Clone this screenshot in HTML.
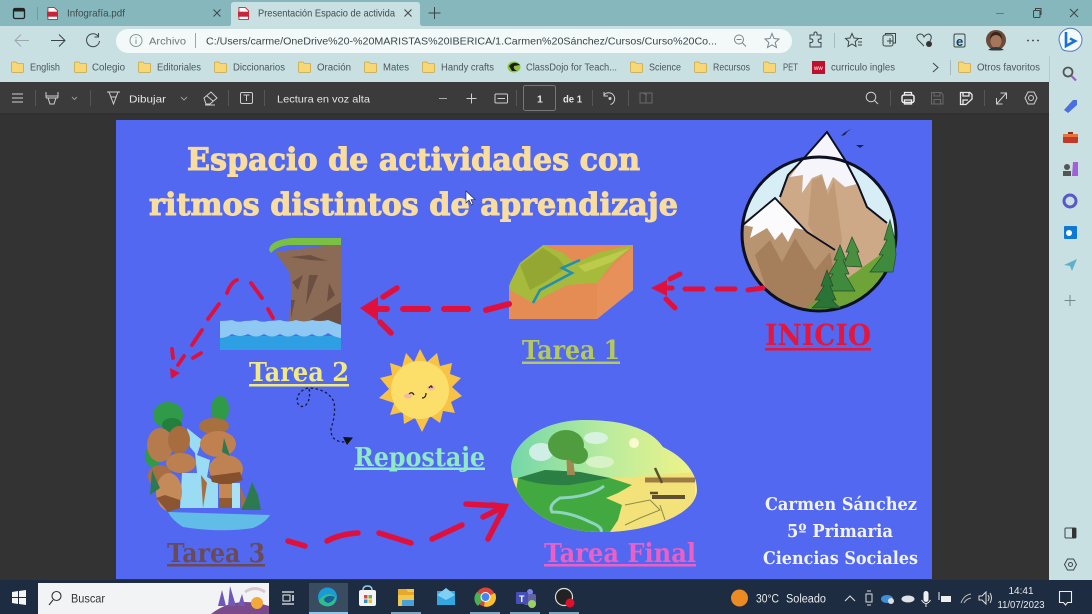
<!DOCTYPE html>
<html lang="es"><head><meta charset="utf-8"><title>Presentación Espacio de actividades</title>
<style>
html,body{margin:0;padding:0;width:1092px;height:614px;overflow:hidden;background:#323232}
svg{display:block;position:absolute;left:0;top:0;font-family:"Liberation Sans",sans-serif;filter:blur(.35px)}
.ui{font-size:10.5px;fill:#3f4b4d}
.bm{font-size:10px;fill:#4a5759}
.pd{font-size:10.5px;fill:#e6e6e6}
.ic{fill:none;stroke:#3c4648;stroke-width:1}
.id{fill:none;stroke:#cfcfcf;stroke-width:1}
.ig{fill:none;stroke:#76878a;stroke-width:1}
.sl{font-family:"DejaVu Serif","Liberation Serif",serif;font-weight:bold}
.r{fill:none;stroke:#e0103c;stroke-linecap:round}
</style></head><body>
<svg width="1092" height="614" viewBox="0 0 1092 614" xmlns="http://www.w3.org/2000/svg">
<defs>
<symbol id="f" viewBox="0 0 13 12" overflow="visible"><path d="M.5 2.2Q.5 1 1.6 1H5L6.2 2.3H11.5Q12.6 2.3 12.6 3.4V10.4Q12.6 11.4 11.5 11.4H1.6Q.5 11.4 .5 10.4Z" fill="#f8d776" stroke="#c9a23e" stroke-width=".7"/></symbol>
<symbol id="pdf" viewBox="0 0 12 14" overflow="visible"><path d="M1 .5H8L11.5 4V13.5H1Z" fill="#fff" stroke="#c8243a"/><rect x="0" y="5" width="12" height="5.5" fill="#c8243a"/></symbol>
<clipPath id="c"><circle cx="819" cy="234" r="76"/></clipPath>
<clipPath id="land"><path d="M511 469C512 440 545 420 585 420C622 420 650 428 663 447C680 455 697 470 697 490C697 512 655 532 600 532C550 532 515 505 511 469Z"/></clipPath>
<linearGradient id="sky" x1="0" x2="1" y1="0" y2="0"><stop offset="0" stop-color="#6fd6a8"/><stop offset=".5" stop-color="#b9eb9e"/><stop offset="1" stop-color="#f6f584"/></linearGradient>
</defs>

<!-- chrome -->
<rect width="1092" height="26" fill="#85b7bc"/>
<rect y="26" width="1092" height="56" fill="#c9e0e3"/>
<rect x="1049" y="82" width="43" height="498" fill="#c9e0e3"/>
<rect x="1049" y="56" width="1" height="26" fill="#b0c8cb"/>
<rect y="82" width="1049" height="32" fill="#3b3b3b"/>
<rect y="114" width="1049" height="466" fill="#333"/>
<rect y="113.500" width="1049" height="1" fill="#2a2a2a"/>

<!-- tabs -->
<rect x="13.500" y="8.500" width="11" height="10" rx="1.500" fill="none" stroke="#222" stroke-width="1.300"/><rect x="13.500" y="8.500" width="11" height="3" fill="#222"/>
<rect x="37" y="7" width="1" height="13" fill="#6d9da2"/>
<use href="#pdf" x="47" y="7" width="11" height="13"/>
<text class="ui" x="67" y="16.500" textLength="58" lengthAdjust="spacingAndGlyphs">Infografía.pdf</text>
<path d="M213.500 9.500L220.500 16.500M220.500 9.500L213.500 16.500" class="ic"/>
<path d="M229 26Q231 26 231 23V5Q231 2 234 2H417Q420 2 420 5V23Q420 26 423 26Z" fill="#c9e0e3"/>
<use href="#pdf" x="238" y="7" width="11" height="13"/>
<text class="ui" x="258" y="16.500" textLength="137" lengthAdjust="spacingAndGlyphs">Presentación Espacio de activida</text>
<path d="M404.500 9.500L411.500 16.500M411.500 9.500L404.500 16.500" class="ic"/>
<path d="M434.500 7V19M428.500 13H440.500" class="ic"/>
<path d="M996 13.500H1004" stroke="#5c7d80" fill="none"/>
<rect x="1033.500" y="10.500" width="6.500" height="7" rx="1" class="ic"/><path d="M1035.500 10V8.500H1041V14.500H1040" class="ic"/>
<path d="M1070 9L1078 17M1078 9L1070 17" class="ic"/>

<!-- nav -->
<path d="M15 40.500H29M21 34.500L15 40.500L21 46.500" fill="none" stroke="#98aaad"/>
<path d="M51 40.500H65M59 34.500L65 40.500L59 46.500" class="ic"/>
<path d="M98 36A6.500 6.500 0 1 0 99.500 41M98.500 33V37H94.500" class="ic"/>
<rect x="116" y="29" width="676" height="24" rx="12" fill="#f3f8f9"/>
<circle cx="136" cy="40.500" r="6" fill="none" stroke="#8a9597" stroke-width="1"/><path d="M136 39.500V44M136 37V38.200" stroke="#8a9597" fill="none"/>
<text class="ui" x="149" y="44.500" textLength="37" lengthAdjust="spacingAndGlyphs" style="fill:#6b7779">Archivo</text>
<rect x="195" y="33" width="1" height="15" fill="#9aa6a8"/>
<text class="ui" x="206" y="44.500" textLength="511" lengthAdjust="spacingAndGlyphs" style="fill:#39464a">C:/Users/carme/OneDrive%20-%20MARISTAS%20IBERICA/1.Carmen%20Sánchez/Cursos/Curso%20Co...</text>
<circle cx="739" cy="39.500" r="4.500" class="ig"/><path d="M736.500 39.500H741.500M742.500 43L746 46.500" class="ig"/>
<path d="M772 33.500L774 38.500L779 39L775.200 42.500L776.500 47.500L772 44.800L767.500 47.500L768.800 42.500L765 39L770 38.500Z" class="ig"/>
<path d="M810 35H814V33.500A1.500 1.500 0 0 1 817 33.500V35H821V39H819.500A1.800 1.800 0 0 0 819.500 42.500H821V47H810V42.500H811.500A1.800 1.800 0 0 0 811.500 39H810Z" class="ic"/>
<rect x="834" y="33" width="1" height="15" fill="#a5bbbe"/>
<path d="M852 33.500L854 38L858.500 38.500L855.200 41.500L856 46.500L852 44L848 46.500L848.800 41.500L845.500 38.500L850 38ZM858 42H862M859.500 38.500H862M858 45H862" class="ic"/>
<rect x="883" y="35" width="10" height="11" rx="2" class="ic"/><path d="M885.500 35V33.500H895.500V43H893M890 38V44M887 41H893" class="ic"/>
<path d="M924 46L918 40Q915 35 920 34Q923 34 924 37Q926 34 929 34Q933 36 930 41" class="ic"/><circle cx="929" cy="44" r="3" fill="#333"/>
<rect x="954" y="34" width="11" height="13" rx="1.500" class="ic"/><text x="956" y="46" font-size="13" font-weight="bold" fill="#123f66">e</text>
<circle cx="996" cy="40" r="10" fill="#6b4a38"/><ellipse cx="996" cy="41" rx="5.500" ry="7" fill="#a5765c"/><path d="M988 50Q996 44 1004 50L1000 50.500H992Z" fill="#2e3a3a"/><path d="M990 40Q990 32 996 32Q1002 32 1002 40Q1000 35 996 35Q992 35 990 40Z" fill="#3a241b"/>
<circle cx="1028" cy="40.500" r=".9" fill="#333"/><circle cx="1033" cy="40.500" r=".9" fill="#333"/><circle cx="1038" cy="40.500" r=".9" fill="#333"/>
<path d="M1062 49Q1059 42 1059 39A11.500 11.500 0 1 1 1068 51Q1064 51 1062 49Z" fill="#f4f9fb" stroke="#4a7cc8" stroke-width="1"/>
<path d="M1066 32V46L1075 41L1070 38.500" fill="none" stroke="#1c72d4" stroke-width="2.600"/>

<!-- bookmarks -->
<use href="#f" x="11" y="61" width="13" height="12"/><text class="bm" x="30" y="70.500" textLength="30" lengthAdjust="spacingAndGlyphs">English</text>
<use href="#f" x="74" y="61" width="13" height="12"/><text class="bm" x="92" y="70.500" textLength="33" lengthAdjust="spacingAndGlyphs">Colegio</text>
<use href="#f" x="138" y="61" width="13" height="12"/><text class="bm" x="157" y="70.500" textLength="44" lengthAdjust="spacingAndGlyphs">Editoriales</text>
<use href="#f" x="214" y="61" width="13" height="12"/><text class="bm" x="233" y="70.500" textLength="52" lengthAdjust="spacingAndGlyphs">Diccionarios</text>
<use href="#f" x="298" y="61" width="13" height="12"/><text class="bm" x="317" y="70.500" textLength="34" lengthAdjust="spacingAndGlyphs">Oración</text>
<use href="#f" x="364" y="61" width="13" height="12"/><text class="bm" x="383" y="70.500" textLength="26" lengthAdjust="spacingAndGlyphs">Mates</text>
<use href="#f" x="422" y="61" width="13" height="12"/><text class="bm" x="441" y="70.500" textLength="53" lengthAdjust="spacingAndGlyphs">Handy crafts</text>
<ellipse cx="514" cy="67" rx="6.500" ry="5.500" fill="#8bc540"/><path d="M509 66Q514 60 520 65L514 66Q513 69 517 71L512 71Z" fill="#1d1d1b"/>
<text class="bm" x="526" y="70.500" textLength="91" lengthAdjust="spacingAndGlyphs">ClassDojo for Teach...</text>
<use href="#f" x="630" y="61" width="13" height="12"/><text class="bm" x="649" y="70.500" textLength="32" lengthAdjust="spacingAndGlyphs">Science</text>
<use href="#f" x="694" y="61" width="13" height="12"/><text class="bm" x="713" y="70.500" textLength="37" lengthAdjust="spacingAndGlyphs">Recursos</text>
<use href="#f" x="763" y="61" width="13" height="12"/><text class="bm" x="783" y="70.500" textLength="15" lengthAdjust="spacingAndGlyphs">PET</text>
<rect x="812" y="61" width="13" height="13" fill="#c20f2b"/><text x="814" y="70" font-size="6" fill="#fff">ww</text>
<text class="bm" x="831" y="70.500" textLength="64" lengthAdjust="spacingAndGlyphs">curriculo ingles</text>
<path d="M933 63L938 67.500L933 72" class="ic"/>
<rect x="950" y="60" width="1" height="15" fill="#a5bbbe"/>
<use href="#f" x="958" y="61" width="13" height="12"/><text class="bm" x="977" y="70.500" textLength="63" lengthAdjust="spacingAndGlyphs">Otros favoritos</text>

<!-- pdf toolbar -->
<path d="M12 94H23M12 98H23M12 102H23" class="id"/>
<rect x="35" y="90" width="1" height="16" fill="#555"/>
<path d="M46 92V97Q46 98 47 98H57Q58 98 58 97V92M46 96H58M48 98L50 104H54L56 98" class="id"/>
<path d="M72 97L74.500 99.500L77 97" fill="none" stroke="#999"/>
<rect x="90" y="90" width="1" height="16" fill="#555"/>
<path d="M107 92H120M109 92L113.500 104L118 92M111 97H116" class="id"/>
<text class="pd" x="129" y="102.500" textLength="37" lengthAdjust="spacingAndGlyphs">Dibujar</text>
<path d="M181 97L184 100L187 97" fill="none" stroke="#999"/>
<path d="M204 98L211 92L217 98L210 104H206ZM207 96L213 101M205 105H215" class="id"/>
<rect x="228" y="90" width="1" height="16" fill="#555"/>
<rect x="240.500" y="92.500" width="12" height="11" rx="1.500" class="id"/><path d="M243.500 95H249.500M246.500 95V101" class="id"/>
<rect x="264" y="90" width="1" height="16" fill="#555"/>
<text class="pd" x="277" y="102.500" textLength="93" lengthAdjust="spacingAndGlyphs">Lectura en voz alta</text>
<path d="M439 98.500H447" stroke="#aaa" fill="none"/>
<path d="M466.500 98.500H476.500M471.500 93.500V103.500" class="id"/>
<rect x="495" y="94" width="12.500" height="9" rx="1" class="id"/><path d="M497.500 98.500H505" class="id"/>
<rect x="516" y="90" width="1" height="16" fill="#555"/>
<rect x="523.500" y="85.500" width="32" height="25" rx="2" fill="none" stroke="#777"/>
<text class="pd" x="537" y="102.500" font-weight="bold">1</text>
<text class="pd" x="563" y="102.500" textLength="19" lengthAdjust="spacingAndGlyphs" font-weight="bold">de 1</text>
<rect x="592" y="90" width="1" height="16" fill="#555"/>
<path d="M604 95A6 6 0 1 1 610.500 104.500M604 92V96H608" class="id"/><circle cx="610" cy="98.500" r="1.500" fill="#ccc"/>
<rect x="628" y="90" width="1" height="16" fill="#555"/>
<path d="M640 93H652V103H640ZM646 93V103M643 93L647 95" fill="none" stroke="#6a6a6a"/>
<circle cx="871" cy="97" r="4.800" class="id"/><path d="M874.500 100.500L878 104" class="id"/>
<rect x="890" y="90" width="1" height="16" fill="#555"/>
<rect x="902" y="95" width="12" height="7.500" rx="2" fill="none" stroke="#eee" stroke-width="1.500"/><path d="M904.500 95V92.500H911.500V95M904.500 100H911.500V104H904.500Z" fill="none" stroke="#eee" stroke-width="1.300"/>
<path d="M931.500 92.500H941L943 94.500V104H931.500ZM934 92.500V96H940V92.500M934 104V99.500H940.500V104" fill="none" stroke="#6a6a6a"/>
<path d="M960.500 92.500H970L972 94.500V99L966 104.500H960.500ZM963 92.500V96H969V92.500M963 104V100H968" fill="none" stroke="#e8e8e8" stroke-width="1.300"/>
<rect x="984" y="90" width="1" height="16" fill="#555"/>
<path d="M997 103.500L1006 93.500M1000.500 93H1006.500V99M996.500 98V104H1002.500" class="id"/>
<circle cx="1031" cy="98" r="2.500" class="id"/><path d="M1028 92H1034L1037 98L1034 104H1028L1025 98Z" class="id"/>

<!-- slide -->
<rect x="116" y="120" width="816" height="459" fill="#5268f0"/>

<g class="sl">
<text x="187" y="170" font-size="31" textLength="453" lengthAdjust="spacingAndGlyphs" fill="#f8dd9f" stroke="#f8dd9f" stroke-width="1">Espacio de actividades con</text>
<text x="149" y="215" font-size="31" textLength="529" lengthAdjust="spacingAndGlyphs" fill="#f8dd9f" stroke="#f8dd9f" stroke-width="1">ritmos distintos de aprendizaje</text>

<text x="249" y="381" font-size="26" textLength="100" lengthAdjust="spacingAndGlyphs" fill="#f1e982">Tarea 2</text><rect x="249" y="384" width="100" height="2.500" fill="#f1e982"/>
<text x="522" y="359" font-size="26" textLength="98" lengthAdjust="spacingAndGlyphs" fill="#b3c95c">Tarea 1</text><rect x="522" y="361.500" width="98" height="2.500" fill="#b3c95c"/>
<text x="765" y="345" font-size="29" textLength="106" lengthAdjust="spacingAndGlyphs" fill="#e4163c">INICIO</text><rect x="765" y="348" width="106" height="2.500" fill="#e4163c"/>
<text x="354" y="466" font-size="26" textLength="131" lengthAdjust="spacingAndGlyphs" fill="#8fe9c6">Repostaje</text><rect x="354" y="467.500" width="131" height="2.500" fill="#8fe9c6"/>
<text x="167" y="562" font-size="26" textLength="98" lengthAdjust="spacingAndGlyphs" fill="#6a4a55">Tarea 3</text><rect x="167" y="564" width="98" height="2.500" fill="#6a4a55"/>
<text x="544" y="562" font-size="26" textLength="152" lengthAdjust="spacingAndGlyphs" fill="#ea60c4">Tarea Final</text><rect x="544" y="564" width="152" height="2.500" fill="#ea60c4"/>
<text x="765" y="510" font-size="18" textLength="152" lengthAdjust="spacingAndGlyphs" fill="#f0f3ff">Carmen Sánchez</text>
<text x="787" y="537" font-size="18" textLength="106" lengthAdjust="spacingAndGlyphs" fill="#f0f3ff">5º Primaria</text>
<text x="763" y="564" font-size="18" textLength="155" lengthAdjust="spacingAndGlyphs" fill="#f0f3ff">Ciencias Sociales</text>
</g>

<!-- mountain -->
<circle cx="819" cy="234" r="77" fill="#d8eef6"/>
<g clip-path="url(#c)">
<path d="M780 197L788 175L805 157L827 132L845 160L858 185L867 207L887 223L900 260V320H780Z" fill="#cda987"/>
<path d="M812 180L822 176L828 195L834 180L842 240L838 262L820 245L808 225Z" fill="#c09a76"/>
<path d="M740 225L775 198L807 232L835 250L845 320H740Z" fill="#b89570"/>
<path d="M755 255L770 240L782 262L795 238L815 270L830 252L838 290L800 318L770 300Z" fill="#a57f5b"/>
<path d="M805 309L877 257L897 248V320H805Z" fill="#6ea437"/>
</g>
<path d="M827 132L805 157L790 177L803 175L802 193L812 178L822 174L827 190L833 177L845 187L857 184L845 160Z" fill="#f5f5fb"/>
<path d="M743 225L775 198L805 230L795 228L788 242L782 232L775 240L767 228L750 238L753 227Z" fill="#fbfbfd"/>
<path d="M780 197L788 175L805 157L827 132L845 160L858 185L867 207L887 223" fill="none" stroke="#0c1020" stroke-width="2"/>
<path d="M743 225L775 198L807 232L835 250" fill="none" stroke="#0c1020" stroke-width="1.800"/>
<circle cx="819" cy="234" r="77" fill="none" stroke="#0c1020" stroke-width="3"/>
<g stroke="#1e4d2a" stroke-width=".7">
<path d="M852 237L846 252L849 252L843 266L862 267L857 252L859 252Z" fill="#4a8f40"/>
<path d="M840 245L834 260L837 260L829 274L833 274L822 291H855L845 274L849 274L843 260L846 260Z" fill="#3f8a3c"/>
<path d="M890 220L884 240L887 240L879 255L883 255L870 272H893L896 255L895 240Z" fill="#3f8a3c"/>
<path d="M827 270L821 286L824 286L815 300L820 300L812 308H840L832 300L836 300L830 286L833 286Z" fill="#2a7438"/>
</g>
<path d="M841 136Q845 131 852 129Q847 131 845 135ZM856 145H864L860 148Z" fill="#1a2350"/>

<!-- tarea 1 land -->
<path d="M509 285L543 245L633 245V290L597 319H509Z" fill="#e58c54"/>
<path d="M597 283L633 247V290L597 319Z" fill="#e8905a"/>
<path d="M510 283L520 263L543 245L563 253L575 263L600 252L633 245L630 248L613 263L597 283L567 285L533 303L510 290Z" fill="#a6ba3c"/>
<path d="M520 265L543 248L558 258L566 268L545 282L530 290Z" fill="#8ea32f" opacity=".8"/>
<path d="M578 266L630 248L612 262L585 272Z" fill="#bccb4c"/>
<path d="M533 303L540 290L572 273L562 268L580 260" fill="none" stroke="#1f8fb3" stroke-width="2.500"/>

<!-- cliff -->
<path d="M275 252L341 244V324H288L292 300L290 273Z" fill="#8b6b56"/>
<path d="M290 257L310 255L328 261L310 260Z M292 282L303 275L298 290Z M309 275L318 275L306 305Z M329 283L335 295L327 302Z M291 300L295 300L291 318Z M310 320L341 302V324H310Z" fill="#6b4f40"/>
<path d="M269 250Q270 240 292 238H341V245H292Q278 245 271 253Z" fill="#7ac143"/>
<rect x="220" y="336" width="121" height="14" fill="#2f9fe3"/>
<path d="M220 321Q226 321 232 320Q238 323 244 321Q250 321 256 320Q262 323 268 321Q274 321 280 320Q288 323 296 320Q304 323 312 320Q320 322 328 320L341 325V338Q334 337 328 333Q320 339 312 334Q304 339 296 334Q288 339 280 334Q272 339 264 334Q256 339 248 334Q240 338 232 334Q226 338 220 338Z" fill="#8fc8f2"/>

<!-- sun -->
<path d="M420 349L427 362L437 353L440 366L452 363L450 374L461 378L452 387L462 396L451 402L455 413L443 411L440 423L430 416L422 432L415 418L404 424L403 412L390 415L394 403L379 398L389 389L380 378L392 375L390 363L402 367L406 353L414 362Z" fill="#f8c244"/>
<circle cx="420" cy="390" r="29" fill="#fcdf6a"/>
<ellipse cx="408" cy="396" rx="4" ry="2.500" fill="#f6b7a4"/><ellipse cx="431" cy="388" rx="4" ry="2.500" fill="#f6b7a4"/>
<path d="M409 394Q412 391 414 395M429 388Q432 384 432 388M422 398Q426 398 426 393" fill="none" stroke="#222" stroke-width="1.200"/>

<!-- waterfall -->
<path d="M168 512L270 515Q265 523 253 528Q220 533 183 527Q172 520 168 512Z" fill="#62bce8"/>
<g>
<ellipse cx="168" cy="415" rx="15" ry="13" fill="#2f9a47"/><ellipse cx="172" cy="425" rx="10" ry="7" fill="#237f3e"/>
<ellipse cx="220" cy="409" rx="9" ry="13" fill="#2f9a47"/>
<ellipse cx="153" cy="456" rx="8" ry="11" fill="#2f9a47"/>
<path d="M187 428L202 440L197 455L210 460L207 477L218 483V508H180L182 473H197L195 453L190 447Z" fill="#9adcf3"/>
<rect x="232" y="483" width="8" height="25" fill="#a9e2f5"/>
<ellipse cx="160" cy="445" rx="13" ry="17" fill="#b57b4d"/>
<ellipse cx="179" cy="440" rx="11" ry="14" fill="#a86d3f"/>
<ellipse cx="160" cy="476" rx="12" ry="11" fill="#a96f44"/>
<ellipse cx="181" cy="463" rx="15" ry="10" fill="#bc8050"/>
<ellipse cx="169" cy="492" rx="13" ry="19" fill="#c48a5a"/>
<path d="M156 498L168 512L180 508V500L165 495Z" fill="#8a5530"/>
<ellipse cx="214" cy="426" rx="15" ry="8" fill="#a9703f"/>
<ellipse cx="218" cy="444" rx="18" ry="13" fill="#c08050"/>
<ellipse cx="226" cy="469" rx="17" ry="14" fill="#bf8253"/>
<path d="M210 476L240 472L243 480L226 485L212 482Z" fill="#85502c"/>
<path d="M219 484H232V508H219Z" fill="#c58853"/><path d="M219 498H232V508H219Z" fill="#925a30"/>
<path d="M240 486L248 505L241 510Z" fill="#a86d3f"/>
<path d="M201 475L207 483L203 508Z" fill="#a86d3f"/>
<path d="M224 438L230 456L222 452Z M152 470L160 488L150 495Z M252 482L258 495L261 510H241L247 497Z" fill="#2d7a52"/>
</g>

<!-- final land -->
<g clip-path="url(#land)">
<rect x="505" y="415" width="200" height="120" fill="url(#sky)"/>
<path d="M620 478L695 472V540H500V478Z" fill="#f3e27a"/>
<path d="M518 478L545 470L580 472L610 478L632 485L618 493L606 498L622 505L618 520L610 532H510Z" fill="#41a93f"/>
<path d="M518 478L545 470L580 472L610 478L570 485Q540 486 518 478Z" fill="#2b7f45"/>
<path d="M604 486Q590 497 560 498Q548 505 552 512Q570 512 590 522Q603 527 601 532" fill="none" stroke="#8fd4c0" stroke-width="3"/>
<path d="M645 480H695" stroke="#9b7c42" stroke-width="5" fill="none"/>
<path d="M652 497H685" stroke="#5e5030" stroke-width="4" fill="none"/>
<path d="M655 468L662 483M650 493H658" stroke="#5a5030" stroke-width="2.500" fill="none"/>
<path d="M625 505L650 500L660 510L640 518L625 525M660 505L665 520" stroke="#8d8b4a" stroke-width="1" fill="none"/>
</g>
<ellipse cx="541" cy="452" rx="12" ry="9" fill="#cfeee6"/><ellipse cx="596" cy="438" rx="12" ry="6" fill="#d8f2e0"/><ellipse cx="600" cy="462" rx="14" ry="6" fill="#d8f2c8"/>
<circle cx="634" cy="443" r="5" fill="#f8fbd0"/>
<path d="M567 470L566 450H572L575 475H567Z" fill="#a08850"/>
<ellipse cx="566" cy="445" rx="18" ry="15" fill="#4f9d3f"/><ellipse cx="578" cy="455" rx="10" ry="9" fill="#4f9d3f"/>

<!-- arrows -->
<g class="r" stroke-width="5">
<path d="M680 274L670 279M666 299L675 308"/>
<path d="M660 288H672M685 289H703M717 289H735M748 290L763 288"/>
<path d="M383 297L397 288M380 322L391 333" stroke-width="5.500"/>
<path d="M372 309H387M403 309H428M444 309H468M486 310L509 304" stroke-width="6"/>
</g>
<path d="M651 288L667 280V296Z" fill="#e0103c"/>
<path d="M360 308L378 297V321Z" fill="#e0103c"/>
<g class="r" stroke-width="3.800">
<path d="M273 318L268 309M262 298L251 283M237 280Q231 282 227 293M219 304L208 319M202 330L192 345M201 353L193 358M184 356L178 365M172 349L173 358"/>
</g>
<path d="M171 379L170 368L180 373Z" fill="#e0103c"/>
<g class="r" stroke-width="5.500">
<path d="M288 541L305 546M327 541Q340 534 358 533M379 533L411 543M432 539L462 525"/>
<path d="M466 504L500 506M483 517L497 510M488 539L502 512"/>
</g>
<path d="M509 504L490 502L503 518Z" fill="#e0103c"/>

<!-- dotted -->
<path d="M308 388Q297 391 297 402Q300 409 306 405Q311 399 309 388Q328 389 334 402Q336 415 331 428Q330 442 345 442" fill="none" stroke="#111a44" stroke-width="1.300" stroke-dasharray="2.500 2.500"/>
<path d="M343 437L353 437.500L347 445Z" fill="#111"/>

<!-- cursor -->
<path d="M466 191V203L469 200L471.500 205L473 204L471 199.500H475Z" fill="#fff" stroke="#222" stroke-width=".6"/>

<!-- sidebar -->
<circle cx="1068" cy="72" r="4.500" fill="none" stroke="#555" stroke-width="1.800"/><path d="M1071.500 76L1076 80.500" stroke="#9a5fc0" stroke-width="2.200"/>
<path d="M1064 110L1073 100H1077V105L1068 113Z" fill="#4a6fe0"/>
<rect x="1063" y="134" width="15" height="9" rx="1" fill="#c0392b"/><rect x="1063" y="134" width="15" height="3" fill="#e8743b"/><rect x="1068" y="132" width="5" height="2" fill="#8a3020"/>
<circle cx="1067" cy="167" r="3" fill="#555"/><rect x="1063" y="171" width="8" height="5" fill="#555"/><path d="M1073 162H1078V176H1072Z" fill="#a060d8"/>
<circle cx="1070" cy="201" r="6" fill="none" stroke="#5a58c8" stroke-width="3"/>
<rect x="1064" y="226" width="13" height="13" rx="1" fill="#0f78d4"/><circle cx="1069" cy="233" r="3" fill="#fff"/>
<path d="M1064 265L1077 259L1072 271L1070 266Z" fill="#5fb0c8"/>
<path d="M1070 295V306M1064.500 300.500H1075.500" class="ig"/>
<rect x="1065" y="528" width="11" height="10" rx="1" class="ic"/><rect x="1072" y="528" width="4" height="10" fill="#333"/>
<circle cx="1070.500" cy="564.500" r="2" class="ic"/><path d="M1067.500 559H1073.500L1076.500 564.500L1073.500 570H1067.500L1064.500 564.500Z" class="ic"/>

<!-- taskbar -->
<rect y="580" width="1092" height="34" fill="#1d2c40"/>
<rect x="38" y="583" width="231" height="31" fill="#f2f3f4"/>
<path d="M12 592L18 591V597H12ZM19 591L26 590V597H19ZM12 598H18V604L12 603ZM19 598H26V605L19 604Z" fill="#f4f4f4"/>
<circle cx="56.500" cy="596" r="4.500" fill="none" stroke="#333" stroke-width="1.100"/><path d="M53 600L49 605" stroke="#333" stroke-width="1.100"/>
<text x="71" y="602.500" font-size="12" textLength="34" lengthAdjust="spacingAndGlyphs" fill="#333">Buscar</text>
<path d="M211 614Q235 595 269 606V614Z" fill="#7a4a8a"/><path d="M218 606L222 590L226 606ZM228 606L230 586L236 606ZM238 606L242 594L245 606Z" fill="#6f58b8"/><circle cx="257" cy="603" r="6" fill="#f2a83a"/><path d="M245 592Q255 585 265 592" fill="none" stroke="#d8c8d0" stroke-width="3"/>
<path d="M282 592H294M282 604H294" stroke="#eee" stroke-width="1.200"/><rect x="283" y="595" width="7" height="6" fill="none" stroke="#eee"/><path d="M293 595V601" stroke="#eee" stroke-width="1.500"/>
<rect x="309" y="583" width="39" height="31" fill="#3a4c5f"/><rect x="309" y="612" width="39" height="2" fill="#8fc8e8"/>
<circle cx="327.500" cy="597" r="9.500" fill="#1b9ad8"/><path d="M319 600Q327 590 336 597Q336 607 326 606Q318 604 319 600Z" fill="#2dc08a"/><path d="M324 599Q328 594 335 597Q333 602 328 603Q324 602 324 599Z" fill="#1a5f9c"/>
<rect x="359" y="590" width="17" height="16" rx="2" fill="#f4f4f4"/><path d="M363 590Q363 586 367.500 586Q372 586 372 590" fill="none" stroke="#8fd0f0" stroke-width="1.500"/><rect x="364" y="595" width="3.500" height="3.500" fill="#e04a3a"/><rect x="368.500" y="595" width="3.500" height="3.500" fill="#6ab04a"/><rect x="364" y="599.500" width="3.500" height="3.500" fill="#2a90d8"/><rect x="368.500" y="599.500" width="3.500" height="3.500" fill="#f2b82e"/>
<path d="M398 589H414V606H398Z" fill="#f2c84a"/><path d="M398 589H406L408 592H414V595H398Z" fill="#e8a82a"/><rect x="402" y="600" width="12" height="6" fill="#4aa0d8"/>
<rect x="437" y="591" width="18" height="14" fill="#34a6e0"/><path d="M437 595L446 588L455 595L446 600Z" fill="#7fd0f4"/>
<circle cx="485.500" cy="597" r="9.500" fill="#db4437"/><path d="M485.500 597L478 606A9.500 9.500 0 0 1 477 592Z" fill="#4caf50"/><path d="M485.500 597L495 593A9.500 9.500 0 0 1 484 606.500Z" fill="#fbc02d"/><circle cx="485.500" cy="597" r="4.500" fill="#4285f4" stroke="#fff"/>
<circle cx="530" cy="592" r="3" fill="#7b83eb"/><rect x="524" y="594" width="12" height="11" rx="2" fill="#6264a7"/><rect x="516" y="592" width="12" height="12" rx="1" fill="#464eb8"/><text x="519" y="602" font-size="9" font-weight="bold" fill="#fff">T</text><circle cx="532" cy="604" r="4" fill="#9ad068"/>
<circle cx="564" cy="597" r="8.500" fill="#222" stroke="#ddd" stroke-width="1.200"/><circle cx="570" cy="603" r="4.500" fill="#e0102c"/>
<rect x="391" y="612" width="30" height="2" fill="#7fa8c0"/><rect x="470" y="612" width="30" height="2" fill="#7fa8c0"/><rect x="510" y="612" width="30" height="2" fill="#7fa8c0"/><rect x="549" y="612" width="30" height="2" fill="#7fa8c0"/>
<circle cx="739.500" cy="598" r="8.500" fill="#ec8a23"/>
<text x="756" y="602.500" font-size="11.500" textLength="23" lengthAdjust="spacingAndGlyphs" fill="#e8ecef">30°C</text>
<text x="786" y="602.500" font-size="11.500" textLength="40" lengthAdjust="spacingAndGlyphs" fill="#e8ecef">Soleado</text>
<path d="M845 601L850 596L855 601" fill="none" stroke="#ddd" stroke-width="1.100"/>
<rect x="866" y="594" width="6" height="8" fill="none" stroke="#ddd"/><path d="M867 591H871M867 605H871" stroke="#ddd"/>
<ellipse cx="887" cy="599" rx="6" ry="4" fill="#3f8fd8"/><circle cx="891" cy="601" r="3" fill="#ddd"/>
<ellipse cx="908" cy="599" rx="6.500" ry="3.500" fill="#dfe3e8"/>
<rect x="923.500" y="591" width="5" height="11" rx="2.500" fill="#eef0f2"/><path d="M921.500 600Q926 607 930.500 600M926 604V607" fill="none" stroke="#eee"/>
<rect x="941" y="596" width="10" height="6" fill="#eee"/><path d="M939 592V600" stroke="#eee"/>
<path d="M961 603Q964 595 971 594M964 603Q966 599 971 598" fill="none" stroke="#bbb"/>
<path d="M979 596H982L986 592V604L982 600H979Z" fill="none" stroke="#ddd"/><path d="M988 595Q990 598 988 601M990 593Q993 598 990 603" fill="none" stroke="#ddd"/>
<text x="1021" y="594" font-size="10" text-anchor="middle" fill="#e8ecef">14:41</text>
<text x="1021" y="608" font-size="10" text-anchor="middle" textLength="47" lengthAdjust="spacingAndGlyphs" fill="#e8ecef">11/07/2023</text>
<path d="M1059.500 591.500H1071.500V602.500H1067.500L1065.500 605L1063.500 602.500H1059.500Z" fill="none" stroke="#eee" stroke-width="1.100"/>
</svg>
</body></html>
